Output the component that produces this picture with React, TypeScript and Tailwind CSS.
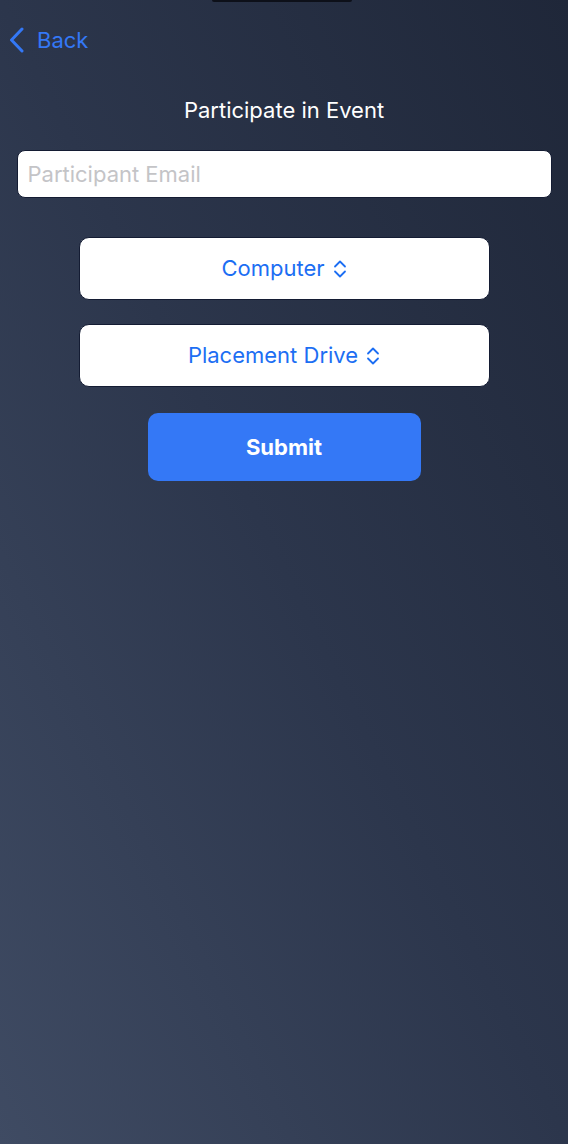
import React from "react";

const Updown = () => (
  <svg width="14" height="18" viewBox="0 0 14 18" fill="none" stroke="currentColor" strokeWidth="1.8" strokeLinecap="round" strokeLinejoin="round">
    <polyline points="2,6.5 7,1.5 12,6.5" />
    <polyline points="2,11.5 7,16.5 12,11.5" />
  </svg>
);

function Picker({ label }: { label: string }) {
  return (
    <button className="flex h-[63px] w-[411px] shrink-0 items-center justify-center gap-2 rounded-[10px] border border-[#141c33] bg-white text-[22px] text-[#1c6ef3]">
      <span>{label}</span>
      <Updown />
    </button>
  );
}

export default function App() {
  return (
    <div className="relative flex min-h-[1144px] w-full flex-col items-center bg-gradient-to-bl from-[#1f2739] via-[#2c364c] to-[#3f4b63] font-['Inter','Liberation_Sans',sans-serif]">
      {/* notch edge */}
      <div className="absolute left-[212px] top-0 h-[2px] w-[140px] rounded-b-full bg-[#0d1019]" />

      <div className="flex w-full items-center gap-3 pl-[9px] pt-[27px]">
        <svg width="16" height="26" viewBox="0 0 16 26" fill="none" stroke="#3478f6" strokeWidth="3" strokeLinecap="round" strokeLinejoin="round">
          <polyline points="13,2 2.5,13 13,24" />
        </svg>
        <span className="text-[22px] leading-none text-[#3478f6]">Back</span>
      </div>

      <h1 className="mt-[46px] text-[22px] leading-none text-white">Participate in Event</h1>

      <input
        className="mt-[29px] h-[48px] w-[535px] shrink-0 rounded-[8px] border border-[#141c33] bg-white px-[10px] text-[22px] text-black outline-none placeholder:text-[#c4c4c7]"
        placeholder="Participant Email"
      />

      <div className="mt-[39px] flex flex-col items-center gap-[24px]">
        <Picker label="Computer" />
        <Picker label="Placement Drive" />
      </div>

      <button className="mt-[26px] h-[68px] w-[273px] shrink-0 rounded-[10px] bg-[#3478f6] text-[22px] font-bold text-white">
        Submit
      </button>
    </div>
  );
}
